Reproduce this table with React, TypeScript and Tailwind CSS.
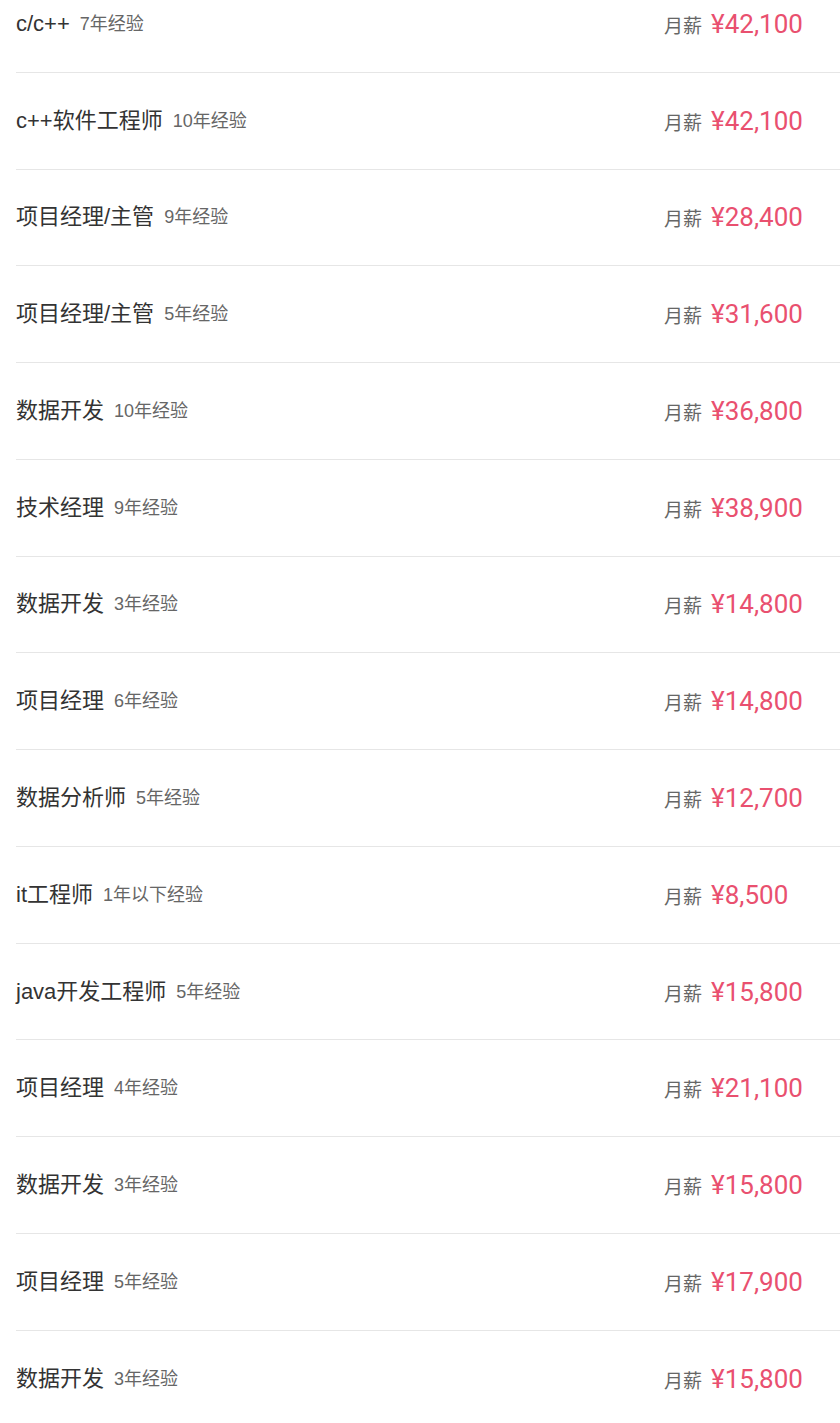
import React from "react";

const rows: [string, string, string][] = [
  ["c/c++", "7年经验", "42,100"],
  ["c++软件工程师", "10年经验", "42,100"],
  ["项目经理/主管", "9年经验", "28,400"],
  ["项目经理/主管", "5年经验", "31,600"],
  ["数据开发", "10年经验", "36,800"],
  ["技术经理", "9年经验", "38,900"],
  ["数据开发", "3年经验", "14,800"],
  ["项目经理", "6年经验", "14,800"],
  ["数据分析师", "5年经验", "12,700"],
  ["it工程师", "1年以下经验", "8,500"],
  ["java开发工程师", "5年经验", "15,800"],
  ["项目经理", "4年经验", "21,100"],
  ["数据开发", "3年经验", "15,800"],
  ["项目经理", "5年经验", "17,900"],
  ["数据开发", "3年经验", "15,800"],
];

export default function App() {
  return (
    <div className="w-[840px] h-[1423px] overflow-hidden bg-white font-['Liberation_Sans','Noto_Sans_CJK_SC',sans-serif]">
      <div className="-mt-[24px] pl-4">
        {rows.map(([title, exp, pay], i) => (
          <div
            key={i}
            className="flex h-[96.77px] items-center border-b border-[#e6e6e6] box-border"
          >
            <div className="flex flex-1 items-center min-w-0">
              <span className="text-[22px] leading-none text-[#333]">{title}</span>
              <span className="ml-[10px] text-[18px] leading-none text-[#666]">{exp}</span>
            </div>
            <div className="w-[176px] flex items-baseline">
              <span className="text-[19px] text-[#666] leading-none">月薪</span>
              <span className="ml-[9px] text-[26px] leading-none font-normal text-[#e9506f] font-['Roboto','Liberation_Sans',sans-serif]">
                ¥{pay}
              </span>
            </div>
          </div>
        ))}
      </div>
    </div>
  );
}
